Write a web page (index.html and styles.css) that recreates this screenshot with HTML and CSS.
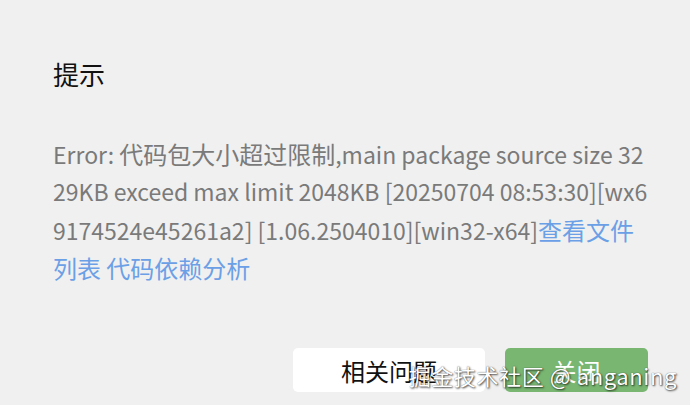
FILE: index.html
```html
<!DOCTYPE html>
<html lang="zh-CN">
<head>
<meta charset="utf-8">
<link rel="stylesheet" href="styles.css">
</head>
<body>
<div class="dialog">
  <h1 class="title">提示</h1>
  <p class="message">Error: <span class="cjk">代码包大小超过限制</span>,main package source size 3229KB exceed max limit 2048KB [20250704 08:53:30][wx69174524e45261a2] [1.06.2504010][win32-x64]<a class="link cjk">查看文件列表</a> <a class="link cjk">代码依赖分析</a></p>
  <div class="footer">
    <button class="btn btn-default">相关问题</button>
    <button class="btn btn-primary">关闭</button>
  </div>
  <div class="watermark">掘金技术社区 @ anganing</div>
</div>
</body>
</html>
```
FILE: styles.css
```css
html, body {
  margin: 0;
  padding: 0;
  background: #f0f0f0;
}
body {
  font-family: "Noto Sans CJK SC", "Noto Sans", sans-serif;
}
.dialog {
  position: relative;
  width: 690px;
  height: 405px;
  box-sizing: border-box;
  padding: 54px 40px 0 53px;
  background: #f0f0f0;
  display: flex;
  flex-direction: column;
}
.title {
  margin: 0;
  font-size: 26px;
  font-weight: 400;
  line-height: 40px;
  color: #111;
}
.message {
  margin: 41px 0 0;
  width: 596px;
  font-size: 23px;
  line-height: 37.4px;
  color: #7a7a7a;
  word-break: break-all;
}
.cjk {
  font-size: 24px;
}
.link {
  color: #6b9fe6;
}
.footer {
  margin-top: auto;
  margin-bottom: 13px;
  margin-right: 2px;
  display: flex;
  justify-content: flex-end;
  gap: 20px;
}
.btn {
  height: 44px;
  border: none;
  border-radius: 5px;
  font-family: inherit;
  font-size: 24px;
  padding: 0;
}
.btn-default {
  width: 192px;
  background: #ffffff;
  color: #111;
}
.btn-primary {
  width: 143px;
  background: #79b672;
  color: #ffffff;
}
.watermark {
  position: absolute;
  right: 13px;
  bottom: 14px;
  font-size: 22px;
  letter-spacing: 0.6px;
  color: #ffffff;
  text-shadow: 1px 1px 2px rgba(0,0,0,0.7), 0 0 1px rgba(0,0,0,0.6);
}
```
